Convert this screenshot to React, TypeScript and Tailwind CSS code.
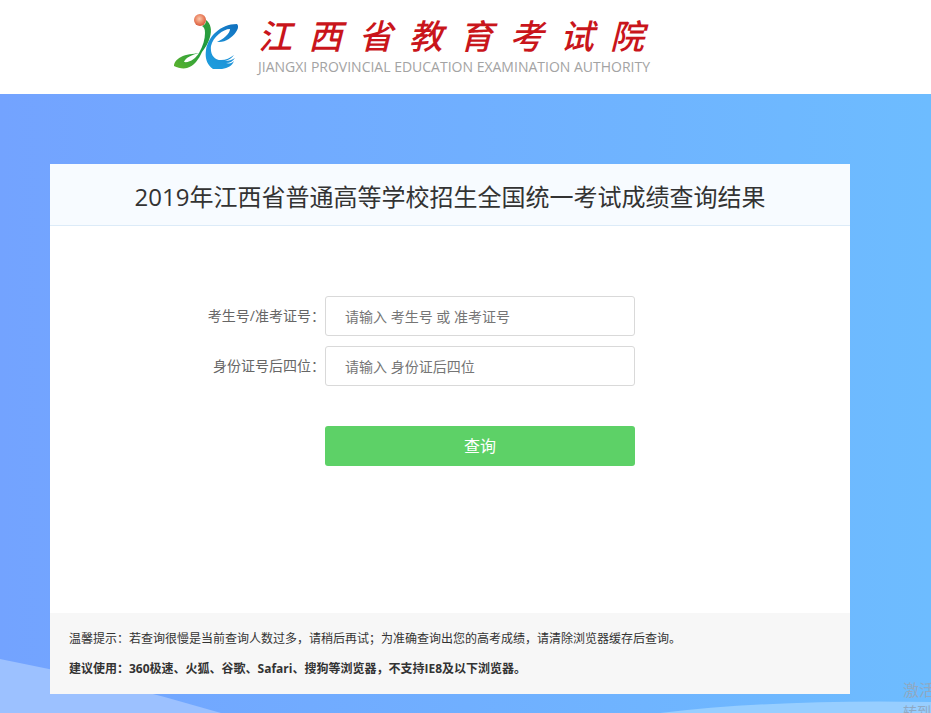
import { FormEvent, useState } from 'react'

interface FieldProps {
  id: string
  label: string
  placeholder: string
  value: string
  onChange: (value: string) => void
}

const SITE_NAME = ['江', '西', '省', '教', '育', '考', '试', '院']

function Logo() {
  return (
    <svg className="h-[58px] w-[66px] shrink-0" viewBox="0 0 66 58" aria-hidden="true">
      <defs>
        <linearGradient id="logo-green" x1="0.8" y1="0" x2="0.2" y2="1">
          <stop offset="0" stopColor="#2f9e3c" />
          <stop offset="0.45" stopColor="#1c9a3f" />
          <stop offset="1" stopColor="#55b030" />
        </linearGradient>
        <linearGradient id="logo-blue" x1="0.8" y1="0" x2="0.2" y2="1">
          <stop offset="0" stopColor="#1173c0" />
          <stop offset="0.5" stopColor="#1c8fd6" />
          <stop offset="1" stopColor="#1f9ddd" />
        </linearGradient>
        <radialGradient id="logo-ball" cx="0.45" cy="0.4" r="0.6">
          <stop offset="0" stopColor="#fbc9ad" />
          <stop offset="0.6" stopColor="#ea8462" />
          <stop offset="1" stopColor="#d65a3c" />
        </radialGradient>
      </defs>
      <path
        d="M32 7C37 11 38 17 36 24C34 31 31 35 28 39C25 46 20 53 13 55C9 56 4 55 0 53C0 49 3 46 7 44C12 41 19 41 25 40C18 42 12 44 10 49C16 50 22 45 25 40C29 33 31 26 31 20C31 16 30 14 28 13C31 12 32 10 32 7Z"
        fill="url(#logo-green)"
      />
      <path
        d="M32 37C34 24 46 11 63 11C67 15 59 24 53 27C49 29 46 29 43 29C49 26 56 21 56 16C49 16 39 24 37 33C36 41 40 47 47 47C52 47 56 45 60 42C58 45 55 47 51 48C55 48 58 47 61 45C59 48 56 50 52 50C56 51 58 50 60 48C58 53 54 55 48 56L39 56C32 51 31 44 32 37Z"
        fill="url(#logo-blue)"
      />
      <circle cx="26" cy="7" r="6" fill="url(#logo-ball)" />
    </svg>
  )
}

function Field({ id, label, placeholder, value, onChange }: FieldProps) {
  return (
    <div className="flex items-center">
      <label htmlFor={id} className="w-[275px] shrink-0 text-right text-sm text-[#666]">
        {label}
      </label>
      <input
        id={id}
        type="text"
        value={value}
        placeholder={placeholder}
        onChange={(e) => onChange(e.target.value)}
        className="h-10 w-full max-w-[310px] rounded-[3px] border border-[#d9d9d9] bg-white px-[19px] text-sm text-[#333] outline-none placeholder:text-[#757575]"
      />
    </div>
  )
}

function App() {
  const [examId, setExamId] = useState('')
  const [idTail, setIdTail] = useState('')

  const handleSubmit = (e: FormEvent) => {
    e.preventDefault()
  }

  return (
    <div className="flex min-h-screen flex-col bg-white font-['Open_Sans','Noto_Sans_CJK_SC',sans-serif]">
      <header className="flex h-[94px] items-start gap-[18px] pt-[13px] pl-[174px]">
        <Logo />
        <div className="w-[386px]">
          <h1 className="flex h-[46px] items-center justify-between text-[34px] leading-[46px] font-medium text-[#c9151b] italic">
            {SITE_NAME.map((char) => (
              <span key={char}>{char}</span>
            ))}
          </h1>
          <p className="text-sm leading-4 whitespace-nowrap text-[#a3a3a3]">
            JIANGXI PROVINCIAL EDUCATION EXAMINATION AUTHORITY
          </p>
        </div>
      </header>

      <main className="relative flex-1 overflow-hidden bg-linear-to-r from-[#73a3ff] via-[#70afff] to-[#6dbcff] px-[50px] pt-[70px] pb-[19px]">
        {/* Waves along the bottom edge */}
        <svg
          className="absolute bottom-0 left-0 h-[54px] w-full"
          viewBox="0 0 931 54"
          preserveAspectRatio="none"
          aria-hidden="true"
        >
          <path d="M0 0Q110 21 221 54H0Z" fill="#9cc1ff" />
          <path d="M660 54Q780 40 931 43V54Z" fill="#97ceff" />
        </svg>

        <section className="relative w-full max-w-[800px] bg-white">
          <h2 className="h-[62px] border-b border-[#dcebf8] bg-[#f7fbff] text-center text-2xl leading-[66px] text-[#333]">
            2019年江西省普通高等学校招生全国统一考试成绩查询结果
          </h2>

          <form onSubmit={handleSubmit} className="flex flex-col gap-[10px] pt-[70px] pb-[147px]">
            <Field
              id="exam-id"
              label="考生号/准考证号："
              placeholder="请输入 考生号 或 准考证号"
              value={examId}
              onChange={setExamId}
            />
            <Field
              id="id-tail"
              label="身份证号后四位："
              placeholder="请输入 身份证后四位"
              value={idTail}
              onChange={setIdTail}
            />
            <div className="pt-[30px] pl-[275px]">
              <button
                type="submit"
                className="block h-10 w-full max-w-[310px] cursor-pointer rounded-[3px] bg-[#5dd167] text-base text-white"
              >
                查询
              </button>
            </div>
          </form>

          <div className="bg-[#f7f7f7] px-[19px] pt-[11px] pb-[10px] text-xs leading-[30px] text-[#333]">
            <p>温馨提示：若查询很慢是当前查询人数过多，请稍后再试；为准确查询出您的高考成绩，请清除浏览器缓存后查询。</p>
            <p className="font-bold">建议使用：360极速、火狐、谷歌、Safari、搜狗等浏览器，不支持IE8及以下浏览器。</p>
          </div>
        </section>

        {/* System watermark, cut off by the window edge */}
        <div className="pointer-events-none absolute right-0 bottom-0 h-[35px] w-7 overflow-hidden whitespace-nowrap text-[#8fa9c4]">
          <p className="text-base leading-6">激活</p>
          <p className="text-sm leading-5">转到</p>
        </div>
      </main>
    </div>
  )
}

export default App
